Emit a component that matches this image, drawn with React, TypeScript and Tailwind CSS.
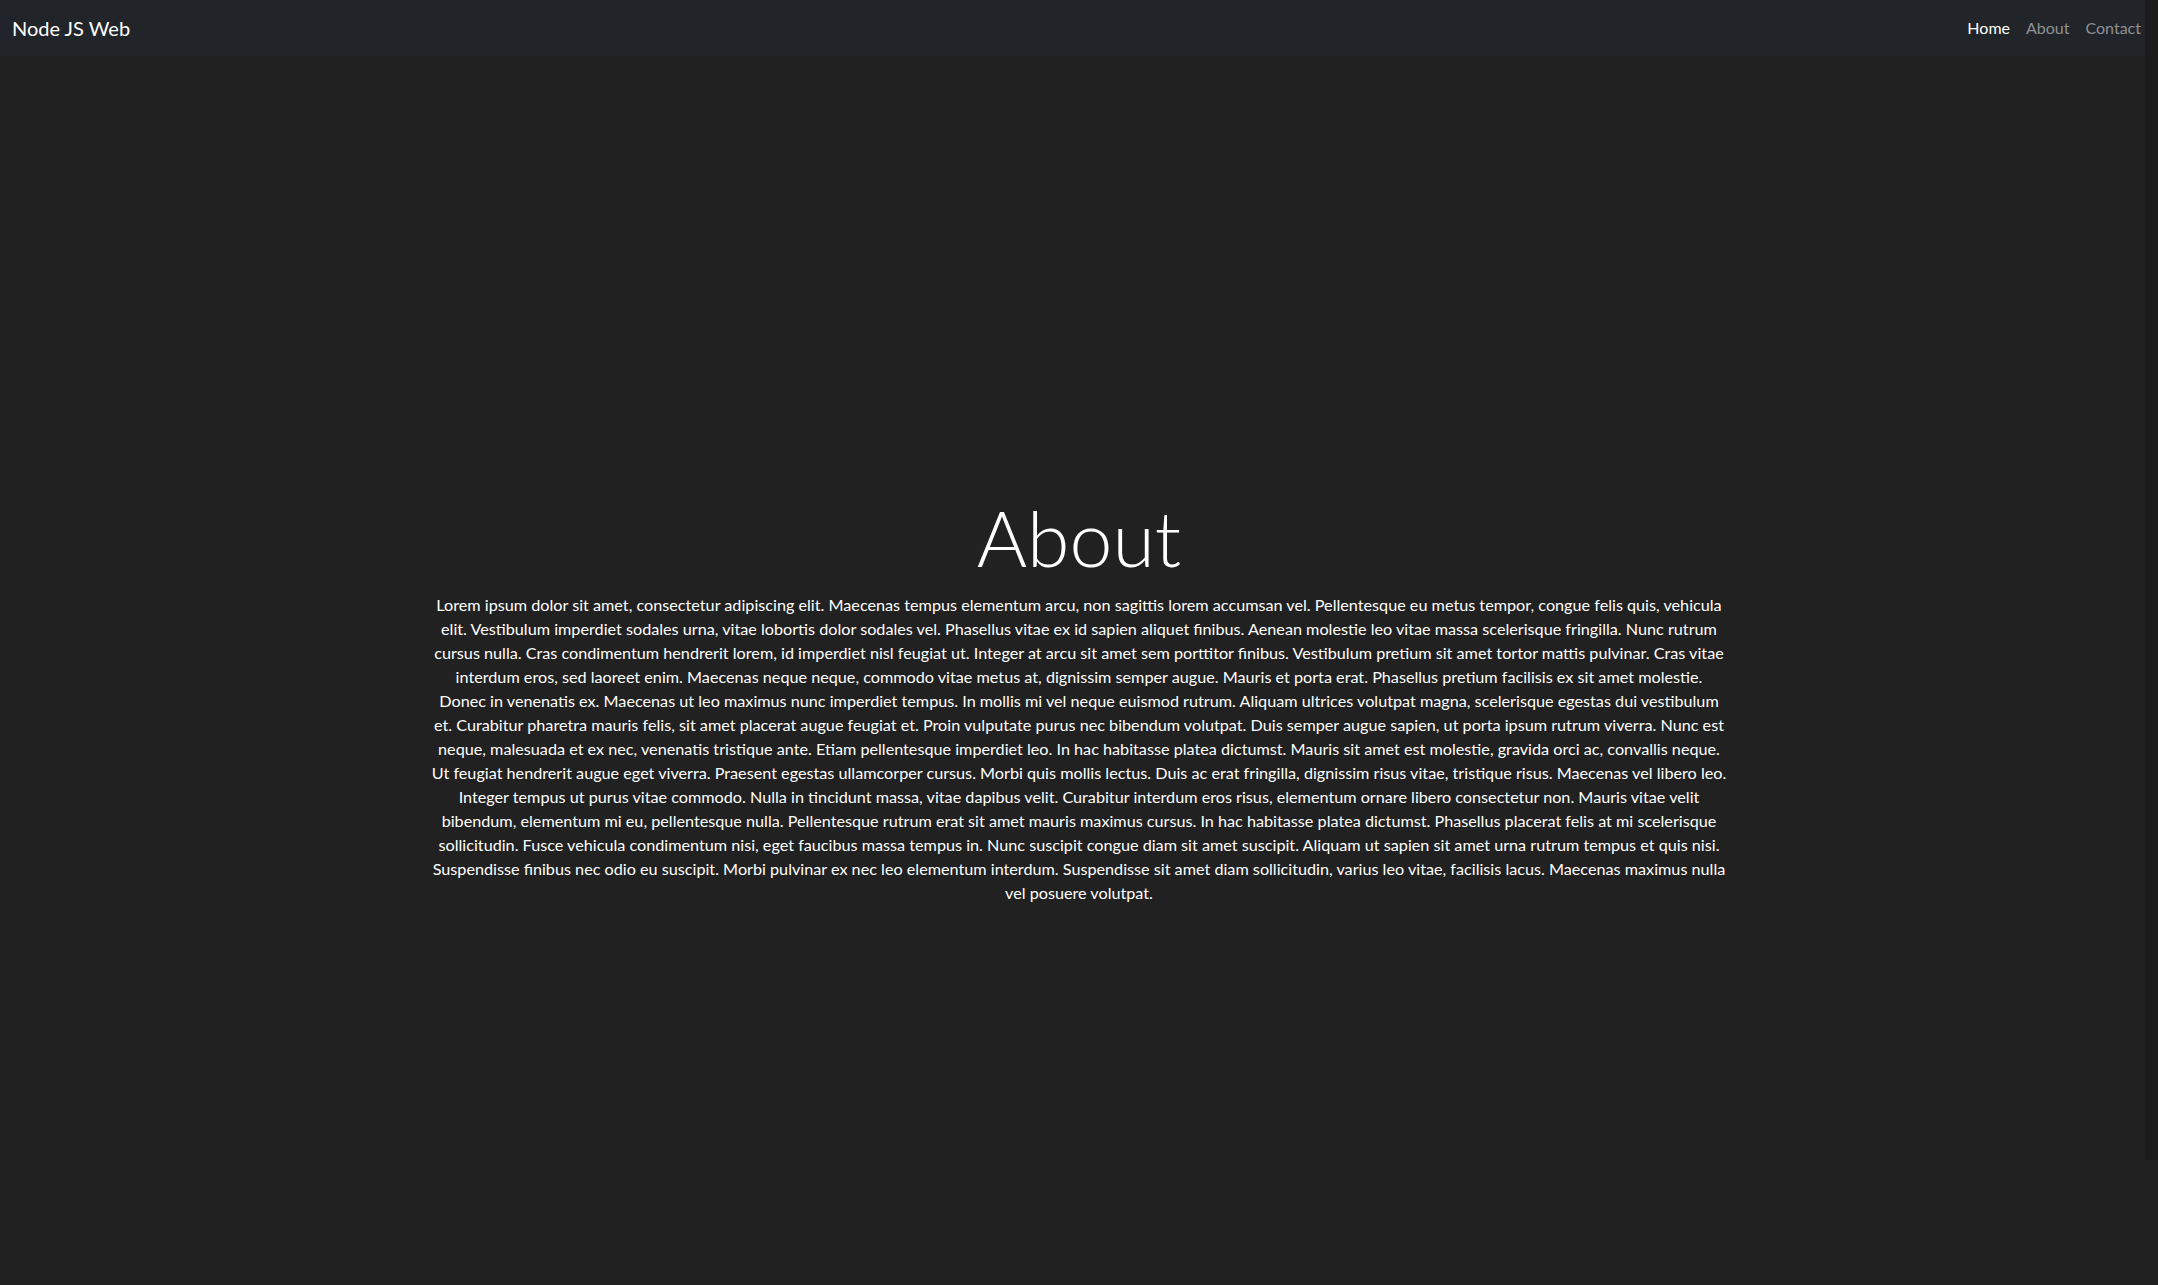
const lines = [
  "Lorem ipsum dolor sit amet, consectetur adipiscing elit. Maecenas tempus elementum arcu, non sagittis lorem accumsan vel. Pellentesque eu metus tempor, congue felis quis, vehicula",
  "elit. Vestibulum imperdiet sodales urna, vitae lobortis dolor sodales vel. Phasellus vitae ex id sapien aliquet finibus. Aenean molestie leo vitae massa scelerisque fringilla. Nunc rutrum",
  "cursus nulla. Cras condimentum hendrerit lorem, id imperdiet nisl feugiat ut. Integer at arcu sit amet sem porttitor finibus. Vestibulum pretium sit amet tortor mattis pulvinar. Cras vitae",
  "interdum eros, sed laoreet enim. Maecenas neque neque, commodo vitae metus at, dignissim semper augue. Mauris et porta erat. Phasellus pretium facilisis ex sit amet molestie.",
  "Donec in venenatis ex. Maecenas ut leo maximus nunc imperdiet tempus. In mollis mi vel neque euismod rutrum. Aliquam ultrices volutpat magna, scelerisque egestas dui vestibulum",
  "et. Curabitur pharetra mauris felis, sit amet placerat augue feugiat et. Proin vulputate purus nec bibendum volutpat. Duis semper augue sapien, ut porta ipsum rutrum viverra. Nunc est",
  "neque, malesuada et ex nec, venenatis tristique ante. Etiam pellentesque imperdiet leo. In hac habitasse platea dictumst. Mauris sit amet est molestie, gravida orci ac, convallis neque.",
  "Ut feugiat hendrerit augue eget viverra. Praesent egestas ullamcorper cursus. Morbi quis mollis lectus. Duis ac erat fringilla, dignissim risus vitae, tristique risus. Maecenas vel libero leo.",
  "Integer tempus ut purus vitae commodo. Nulla in tincidunt massa, vitae dapibus velit. Curabitur interdum eros risus, elementum ornare libero consectetur non. Mauris vitae velit",
  "bibendum, elementum mi eu, pellentesque nulla. Pellentesque rutrum erat sit amet mauris maximus cursus. In hac habitasse platea dictumst. Phasellus placerat felis at mi scelerisque",
  "sollicitudin. Fusce vehicula condimentum nisi, eget faucibus massa tempus in. Nunc suscipit congue diam sit amet suscipit. Aliquam ut sapien sit amet urna rutrum tempus et quis nisi.",
  "Suspendisse finibus nec odio eu suscipit. Morbi pulvinar ex nec leo elementum interdum. Suspendisse sit amet diam sollicitudin, varius leo vitae, facilisis lacus. Maecenas maximus nulla",
  "vel posuere volutpat.",
];

export default function App() {
  return (
    <div className="relative min-h-[1285px] bg-[#212121] text-white font-['Lato','Liberation_Sans',sans-serif]">
      <nav className="flex items-center justify-between h-[56px] pl-3 pr-[9px] bg-[#212529]">
        <a className="text-[20px] text-white">Node JS Web</a>
        <ul className="flex items-center text-[16px]">
          <li className="px-2 text-white">Home</li>
          <li className="px-2 text-[#8e9093]">About</li>
          <li className="px-2 text-[#8e9093]">Contact</li>
        </ul>
      </nav>

      <main className="flex flex-col items-center pt-[433px]">
        <h1 className="text-[77px] font-light leading-[96px] mb-2">About</h1>
        <p className="text-[16.2px] leading-6 text-center">
          {lines.map((l, i) => (
            <span key={i} className="block whitespace-nowrap">
              {l}
            </span>
          ))}
        </p>
      </main>

      <div className="absolute top-0 right-0 w-[13px] h-[1160px] bg-[#1c1c1c]"></div>
    </div>
  );
}
